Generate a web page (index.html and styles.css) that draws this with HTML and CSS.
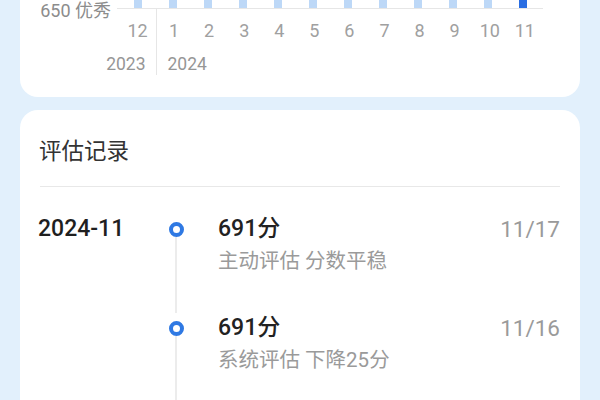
FILE: index.html
```html
<!DOCTYPE html>
<html lang="zh-CN">
<head>
<meta charset="utf-8">
<link rel="stylesheet" href="styles.css">
</head>
<body>
<div class="page">
  <section class="card chart-card">
    <div class="chart">
      <div class="y-label">650 优秀</div>
      <div class="plot">
        <div class="col"><span class="bar" style="height:70px"></span></div>
        <div class="col"><span class="bar" style="height:72px"></span></div>
        <div class="col"><span class="bar" style="height:68px"></span></div>
        <div class="col"><span class="bar" style="height:74px"></span></div>
        <div class="col"><span class="bar" style="height:70px"></span></div>
        <div class="col"><span class="bar" style="height:71px"></span></div>
        <div class="col"><span class="bar" style="height:73px"></span></div>
        <div class="col"><span class="bar" style="height:69px"></span></div>
        <div class="col"><span class="bar" style="height:72px"></span></div>
        <div class="col"><span class="bar" style="height:70px"></span></div>
        <div class="col"><span class="bar" style="height:74px"></span></div>
        <div class="col"><span class="bar current" style="height:76px"></span></div>
      </div>
      <div class="x-spacer"></div>
      <div class="x-axis">
        <div class="year-block first">
          <div class="months"><span class="m">12</span></div>
          <div class="year">2023</div>
        </div>
        <div class="year-block second">
          <div class="months">
            <span class="m">1</span><span class="m">2</span><span class="m">3</span><span class="m">4</span><span class="m">5</span><span class="m">6</span><span class="m">7</span><span class="m">8</span><span class="m">9</span><span class="m">10</span><span class="m">11</span>
          </div>
          <div class="year">2024</div>
        </div>
      </div>
    </div>
  </section>

  <section class="card record-card">
    <h2 class="title">评估记录</h2>
    <div class="divider"></div>
    <div class="timeline">
      <div class="item">
        <div class="month">2024-11</div>
        <div class="rail"><span class="dot"></span><span class="line"></span></div>
        <div class="content">
          <div class="score">691分</div>
          <div class="desc">主动评估 分数平稳</div>
        </div>
        <div class="date">11/17</div>
      </div>
      <div class="item">
        <div class="month"></div>
        <div class="rail"><span class="dot"></span><span class="line"></span></div>
        <div class="content">
          <div class="score">691分</div>
          <div class="desc">系统评估 下降25分</div>
        </div>
        <div class="date">11/16</div>
      </div>
    </div>
  </section>
</div>
</body>
</html>
```

FILE: styles.css
```css
* { box-sizing: border-box; }

html, body {
  margin: 0;
  padding: 0;
  background: #e2f0fc;
  font-family: Roboto, "Noto Sans CJK SC", "Noto Sans", sans-serif;
  overflow: hidden;
}

.page {
  padding: 0 20px;
}

.card {
  background: #ffffff;
  border-radius: 18px;
}

/* ---------- chart card ---------- */
.chart-card {
  margin-top: -107px;
  padding: 16px 20px 22px 20px;
}

.chart {
  display: grid;
  grid-template-columns: 77px 426px;
}

.y-label {
  align-self: end;
  justify-self: end;
  padding-right: 6px;
  font-size: 18px;
  line-height: 20px;
  margin-bottom: -12px;
  color: #8c8c8c;
  white-space: nowrap;
}

.plot {
  height: 100px;
  display: grid;
  grid-template-columns: repeat(12, 1fr);
  padding: 0 2px 0 3px;
  border-bottom: 1px solid #e6e6e6;
}

.col {
  display: flex;
  justify-content: center;
  align-items: flex-end;
}

.bar {
  display: block;
  width: 8px;
  background: #bdd8f7;
}

.bar.current {
  background: #2a6ee2;
}

.x-axis {
  display: flex;
  padding-left: 3px;
}

.year-block.first {
  width: 35.5px;
}

.year-block.second {
  border-left: 1px solid #e6e6e6;
}

.months {
  display: flex;
}

.m {
  width: 35.08px;
  text-align: center;
  font-size: 18px;
  line-height: 44px;
  color: #a0a0a0;
}

.year {
  font-size: 17.5px;
  line-height: 22px;
  color: #969696;
  white-space: nowrap;
}

.first .year {
  text-align: right;
  padding-right: 10px;
  margin-left: -20px;
}

.second .year {
  padding-left: 11px;
}

/* ---------- record card ---------- */
.record-card {
  margin-top: 13px;
  padding: 26px 20px 0 20px;
  min-height: 320px;
}

.title {
  margin: 0 0 0 -1px;
  font-size: 22.5px;
  line-height: 30px;
  font-weight: 400;
  color: #333333;
}

.divider {
  margin-top: 20px;
  height: 1px;
  background: #e8e8e8;
}

.timeline {
  padding-top: 27px;
}

.item {
  display: grid;
  grid-template-columns: 128px 16px 1fr auto;
}

.month {
  margin-left: -2px;
  font-size: 23px;
  line-height: 30px;
  font-weight: 500;
  color: #1f1f1f;
}

.rail {
  display: flex;
  flex-direction: column;
  align-items: center;
}

.dot {
  margin-top: 8px;
  width: 15px;
  height: 15px;
  border: 4px solid #2f79e3;
  border-radius: 50%;
  background: #ffffff;
  flex: none;
}

.line {
  flex: 1;
  width: 1.5px;
  background: #ececec;
}

.content {
  padding: 0 0 38px 34px;
}

.score {
  font-size: 23px;
  line-height: 30px;
  font-weight: 500;
  color: #222222;
}

.desc {
  margin-top: 3px;
  font-size: 20.5px;
  line-height: 28px;
  color: #9a9a9a;
}

.date {
  font-size: 22.5px;
  line-height: 30px;
  color: #9a9a9a;
}
```
